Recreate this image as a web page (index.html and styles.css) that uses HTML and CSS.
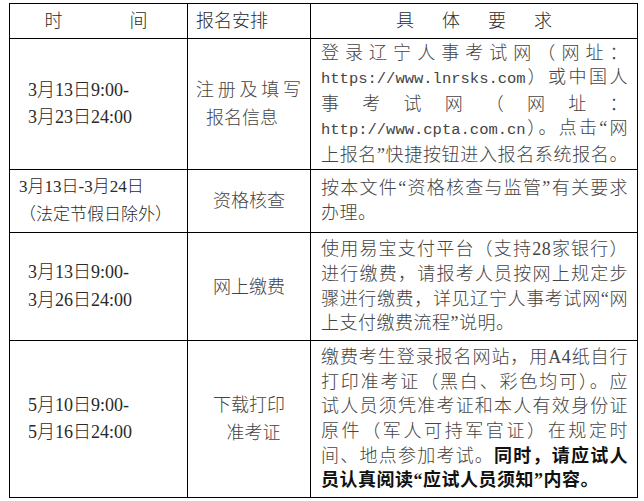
FILE: index.html
```html
<!DOCTYPE html>
<html lang="zh-CN">
<head>
<meta charset="utf-8">
<title>报名安排</title>
<link rel="stylesheet" href="styles.css">
</head>
<body>
<table class="schedule">
  <colgroup>
    <col class="c-time">
    <col class="c-step">
    <col class="c-req">
  </colgroup>
  <thead>
    <tr class="r-head">
      <th class="h-time"><div class="spread spread-time"><span>时</span><span>间</span></div></th>
      <th class="h-step">报名安排</th>
      <th class="h-req"><div class="spread spread-req"><span>具</span><span>体</span><span>要</span><span>求</span></div></th>
    </tr>
  </thead>
  <tbody>
    <tr class="r-reg">
      <td class="time"><span class="ln">3月13日9:00-</span><span class="ln">3月23日24:00</span></td>
      <td class="step"><span class="ln step-spread">注册及填写</span><span class="ln step-indent">报名信息</span></td>
      <td class="req">
        <span class="ln">登录辽宁人事考试网（网址：</span>
        <span class="ln"><span class="url">https://www.lnrsks.com</span>）或中国人</span>
        <span class="ln">事考试网（网址：</span>
        <span class="ln"><span class="url">http://www.cpta.com.cn</span>）。点击“网</span>
        <span class="ln">上报名”快捷按钮进入报名系统报名。</span>
      </td>
    </tr>
    <tr class="r-check">
      <td class="time time-narrow"><span class="ln">3月13日-3月24日</span><span class="ln">（法定节假日除外）</span></td>
      <td class="step">资格核查</td>
      <td class="req">
        <span class="ln">按本文件“资格核查与监管”有关要求</span>
        <span class="ln ln-end">办理。</span>
      </td>
    </tr>
    <tr class="r-pay">
      <td class="time"><span class="ln">3月13日9:00-</span><span class="ln">3月26日24:00</span></td>
      <td class="step">网上缴费</td>
      <td class="req">
        <span class="ln">使用易宝支付平台（支持28家银行）</span>
        <span class="ln">进行缴费，请报考人员按网上规定步</span>
        <span class="ln">骤进行缴费，详见辽宁人事考试网“网</span>
        <span class="ln ln-end">上支付缴费流程”说明。</span>
      </td>
    </tr>
    <tr class="r-print">
      <td class="time"><span class="ln">5月10日9:00-</span><span class="ln">5月16日24:00</span></td>
      <td class="step"><span class="ln">下载打印</span><span class="ln step-shift">准考证</span></td>
      <td class="req">
        <span class="ln">缴费考生登录报名网站，用A4纸自行</span>
        <span class="ln">打印准考证（黑白、彩色均可）。应</span>
        <span class="ln">试人员须凭准考证和本人有效身份证</span>
        <span class="ln">原件（军人可持军官证）在规定时</span>
        <span class="ln">间、地点参加考试。<b class="em">同时，请应试人</b></span>
        <span class="ln ln-end"><b class="em">员认真阅读“应试人员须知”内容。</b></span>
      </td>
    </tr>
  </tbody>
</table>
</body>
</html>
```
FILE: styles.css
```css
body {
  margin: 0;
  background: #fff;
  color: #333;
  font-family: "Liberation Serif", "Noto Sans CJK SC", serif;
}

.schedule {
  border-collapse: collapse;
  table-layout: fixed;
  width: 629px;
  margin: 3px 0 0 9px;
}

.c-time { width: 178px; }
.c-step { width: 123px; }

.schedule th,
.schedule td {
  border: 1px solid #000;
  padding: 0;
  vertical-align: middle;
  font-weight: 300;
}

.r-head { height: 35px; }
.r-reg { height: 131px; }
.r-check { height: 63px; }
.r-pay { height: 108px; }
.r-print { height: 157px; }

.schedule th {
  font-size: 18px;
  line-height: 24px;
  color: #2a2a2a;
}

.spread {
  display: flex;
  justify-content: center;
}

.spread-time {
  gap: 67px;
  padding-right: 5px;
}

.spread-req {
  gap: 28px;
}

.schedule .h-step {
  text-align: left;
  padding-left: 8px;
}

.ln {
  display: block;
}

.schedule .time {
  font-size: 18px;
  line-height: 27.5px;
  padding-left: 18px;
  text-align: left;
  color: #2a2a2a;
}

.schedule .time-narrow {
  font-size: 17px;
  line-height: 28px;
  padding-left: 9px;
}

.schedule .step {
  font-size: 18px;
  line-height: 28px;
  text-align: center;
  color: #444;
}

.step-spread {
  text-align: justify;
  text-align-last: justify;
  padding: 0 9px 0 8px;
}

.step-indent {
  text-align: left;
  padding-left: 18px;
}

.step-shift {
  padding-left: 9px;
}

.schedule .req {
  font-size: 18px;
  letter-spacing: 0.5px;
  line-height: 24.6px;
  padding: 0 9px 0 10px;
  color: #444;
}

.req .ln {
  text-align: justify;
  text-align-last: justify;
}

.req .ln-end {
  text-align-last: left;
}

.url {
  font-family: "Liberation Mono", monospace;
  font-size: 15.5px;
  letter-spacing: 0;
}

.em {
  font-weight: 700;
  color: #111;
}
```
